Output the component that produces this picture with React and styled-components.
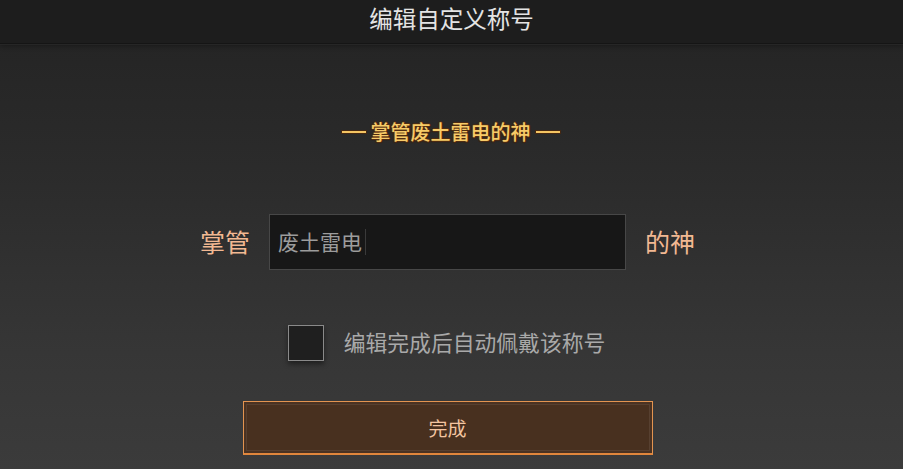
import React from "react";
import styled, { createGlobalStyle } from "styled-components";

const Global = createGlobalStyle`
  html, body { margin: 0; padding: 0; }
  body {
    width: 903px;
    height: 469px;
    overflow: hidden;
    font-family: "Noto Sans CJK SC", "Noto Sans", sans-serif;
    background: #2a2a2a;
  }
`;

const Screen = styled.div`
  width: 903px;
  height: 469px;
  display: flex;
  flex-direction: column;
  background: linear-gradient(180deg, #232323 0%, #2c2c2c 40%, #363636 75%, #3b3b3b 100%);
`;

const Header = styled.header`
  height: 43px;
  flex: none;
  display: flex;
  align-items: center;
  justify-content: center;
  background: #1d1d1d;
  border-bottom: 1px solid #151515;
  box-shadow: 0 1px 0 #262626, 0 3px 4px rgba(0, 0, 0, 0.25);
`;

const HeaderTitle = styled.h1`
  margin: 0;
  font-size: 23.5px;
  font-weight: 400;
  color: #e4e4e4;
  line-height: 1;
  transform: translateY(-3px);
`;

const Body = styled.main`
  flex: 1;
  display: flex;
  flex-direction: column;
  align-items: center;
  padding-right: 6px;
`;

const Banner = styled.div`
  margin-top: 75px;
  height: 26px;
  display: flex;
  align-items: center;
  gap: 5px;
  padding-left: 4px;
`;

const Dash = styled.span`
  width: 24px;
  height: 2px;
  background: #f4c462;
  box-shadow: 0 0 0 1px rgba(74, 40, 14, 0.85);
`;

const BannerText = styled.span`
  font-size: 20px;
  font-weight: 500;
  line-height: 26px;
  color: #f7cb68;
  text-shadow:
    1px 0 0 #4f2c12, -1px 0 0 #4f2c12, 0 1px 0 #4f2c12, 0 -1px 0 #4f2c12,
    1px 1px 1px #3a2010, -1px 1px 1px #3a2010;
`;

const NameRow = styled.div`
  margin-top: 69px;
  display: flex;
  align-items: center;
  gap: 19px;
  padding-right: 2px;
`;

const Affix = styled.span`
  font-size: 25px;
  line-height: 1;
  color: #f2b892;
  transform: translateY(-1px);
`;

const Field = styled.div`
  box-sizing: border-box;
  width: 357px;
  height: 56px;
  border: 1px solid #474747;
  background: #171717;
  display: flex;
  align-items: center;
  padding: 0 0 0 8px;
`;

const FieldText = styled.span`
  font-size: 21px;
  line-height: 1;
  color: #9c9c9c;
  transform: translateY(-1px);
`;

const Caret = styled.span`
  width: 1px;
  height: 26px;
  margin-left: 3px;
  background: #3a3a3a;
`;

const CheckRow = styled.label`
  margin-top: 55px;
  display: flex;
  align-items: center;
  gap: 20px;
  cursor: pointer;
  padding-right: 4px;
`;

const Box = styled.span`
  width: 36px;
  height: 36px;
  box-sizing: border-box;
  border: 1px solid #8a8a8a;
  background: #1f1f1f;
  box-shadow: 0 3px 5px rgba(0, 0, 0, 0.45);
`;

const CheckLabel = styled.span`
  font-size: 21.8px;
  line-height: 1;
  color: #a9a9a9;
  transform: translateY(-1px);
`;

const DoneButton = styled.button`
  margin-top: 40px;
  width: 410px;
  height: 54px;
  border: 1px solid #e39450;
  border-bottom: 2px solid #e0863c;
  background: #48301f;
  box-shadow: inset 0 0 0 2px #4a3222, inset 0 0 0 3px #574030;
  color: #f3c4a0;
  font-family: "Noto Sans CJK SC", "Noto Sans", sans-serif;
  font-size: 19px;
  padding: 0;
  cursor: pointer;
  margin-right: 2px;
`;

export default function App() {
  return (
    <>
      <Global />
      <Screen>
        <Header>
          <HeaderTitle>编辑自定义称号</HeaderTitle>
        </Header>
        <Body>
          <Banner>
            <Dash />
            <BannerText>掌管废土雷电的神</BannerText>
            <Dash />
          </Banner>
          <NameRow>
            <Affix>掌管</Affix>
            <Field role="textbox">
              <FieldText>废土雷电</FieldText>
              <Caret />
            </Field>
            <Affix>的神</Affix>
          </NameRow>
          <CheckRow>
            <Box />
            <CheckLabel>编辑完成后自动佩戴该称号</CheckLabel>
          </CheckRow>
          <DoneButton>完成</DoneButton>
        </Body>
      </Screen>
    </>
  );
}
